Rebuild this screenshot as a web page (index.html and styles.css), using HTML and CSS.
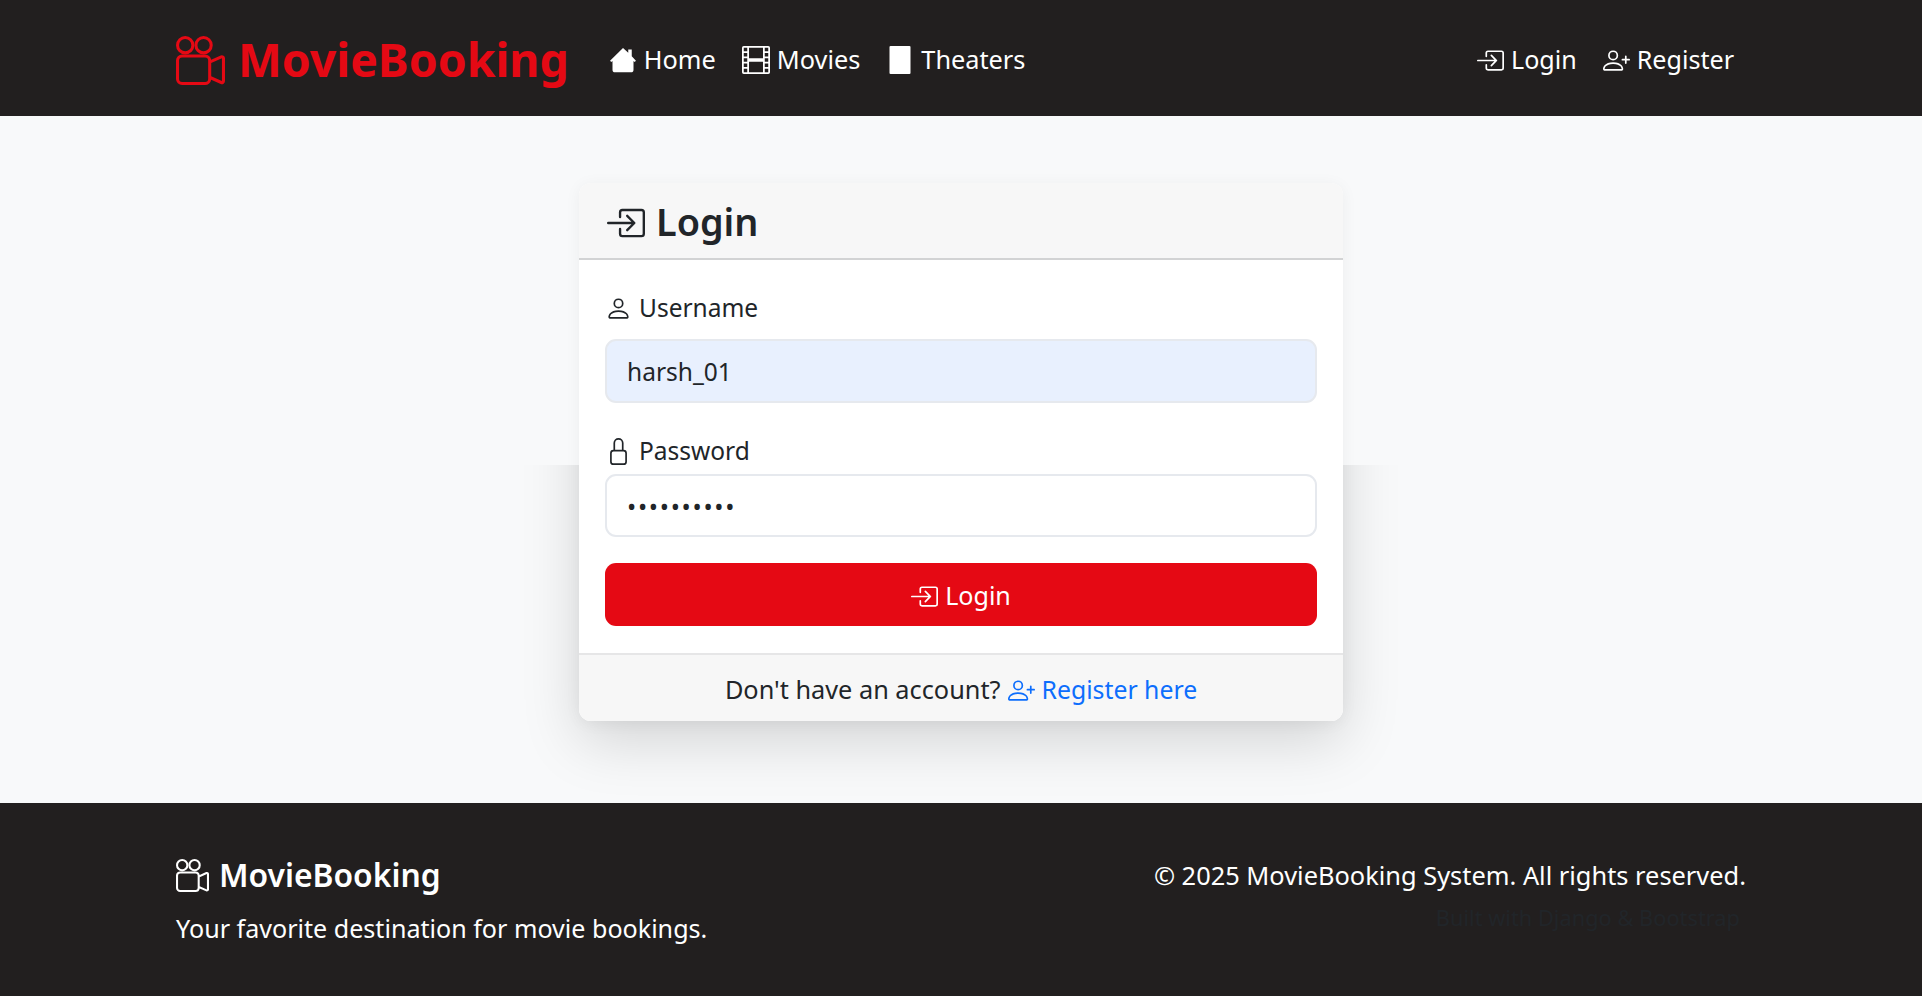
FILE: index.html
```html
<!DOCTYPE html>
<html lang="en">
<head>
  <meta charset="UTF-8">
  <title>Login - MovieBooking</title>
  <link rel="stylesheet" href="styles.css">
</head>
<body>
  <nav class="navbar">
    <a class="brand" href="#">
      <svg class="brand-icon" viewBox="0 0 16 16" fill="currentColor"><path d="M6 3a3 3 0 1 1-6 0 3 3 0 0 1 6 0zM1 3a2 2 0 1 0 4 0 2 2 0 0 0-4 0z"/><path d="M9 6h.5a2 2 0 0 1 1.983 1.738l3.11-1.382A1 1 0 0 1 16 7.269v7.462a1 1 0 0 1-1.406.913l-3.111-1.382A2 2 0 0 1 9.5 16H2a2 2 0 0 1-2-2V8a2 2 0 0 1 2-2h7zm6 8.73V7.27l-3.5 1.555v4.35l3.5 1.556zM1 8v6a1 1 0 0 0 1 1h7.5a1 1 0 0 0 1-1V8a1 1 0 0 0-1-1H2a1 1 0 0 0-1 1z"/><path d="M9 6a3 3 0 1 0 0-6 3 3 0 0 0 0 6zM7 3a2 2 0 1 1 4 0 2 2 0 0 1-4 0z"/></svg>
      MovieBooking
    </a>
    <ul class="nav-links nav-main">
      <li><a href="#"><svg class="icon" viewBox="0 0 16 16" fill="currentColor"><path d="M8 1.200.6 8.400l.7.7L2 8.500v5A1.500 1.500 0 0 0 3.500 15h9a1.500 1.500 0 0 0 1.500-1.500v-5l.7.6.7-.7L13 5.800V2h-2v1.800z"/></svg>Home</a></li>
      <li><a href="#"><svg class="icon" viewBox="0 0 16 16" fill="currentColor"><path d="M0 1a1 1 0 0 1 1-1h14a1 1 0 0 1 1 1v14a1 1 0 0 1-1 1H1a1 1 0 0 1-1-1V1zm4 0v6h8V1H4zm8 8H4v6h8V9zM1 1v2h2V1H1zm2 3H1v2h2V4zM1 7v2h2V7H1zm2 3H1v2h2v-2zm-2 3v2h2v-2H1zM15 1h-2v2h2V1zm-2 3v2h2V4h-2zm2 3h-2v2h2V7zm-2 3v2h2v-2h-2zm2 3h-2v2h2v-2z"/></svg>Movies</a></li>
      <li><a href="#"><svg class="icon" viewBox="0 0 16 16" fill="currentColor"><rect x="2" y="0" width="12" height="16" rx="0.6"/></svg>Theaters</a></li>
    </ul>
    <ul class="nav-links nav-right">
      <li><a href="#"><svg class="icon" viewBox="0 0 16 16" fill="currentColor"><path fill-rule="evenodd" d="M10 3.5a.5.5 0 0 0-.5-.5h-8a.5.5 0 0 0-.5.5v9a.5.5 0 0 0 .5.5h8a.5.5 0 0 0 .5-.5v-2a.5.5 0 0 1 1 0v2A1.5 1.5 0 0 1 9.5 14h-8A1.5 1.5 0 0 1 0 12.5v-9A1.5 1.5 0 0 1 1.5 2h8A1.5 1.5 0 0 1 11 3.5v2a.5.5 0 0 1-1 0v-2z" transform="matrix(-1 0 0 1 16 0)"/><path fill-rule="evenodd" d="M11.854 8.354a.5.5 0 0 0 0-.708l-3-3a.5.5 0 1 0-.708.708L10.293 7.500H.5a.5.5 0 0 0 0 1h9.793l-2.147 2.146a.5.5 0 0 0 .708.708l3-3z"/></svg>Login</a></li>
      <li><a href="#"><svg class="icon" viewBox="0 0 16 16" fill="currentColor"><path d="M6 8a3 3 0 1 0 0-6 3 3 0 0 0 0 6zm2-3a2 2 0 1 1-4 0 2 2 0 0 1 4 0zm4 8c0 1-1 1-1 1H1s-1 0-1-1 1-4 6-4 6 3 6 4zm-1-.004c-.001-.246-.154-.986-.832-1.664C9.516 10.680 8.289 10 6 10c-2.290 0-3.516.68-4.168 1.332-.678.678-.83 1.418-.832 1.664h10z"/><path fill-rule="evenodd" d="M13.500 5a.5.5 0 0 1 .5.5V7h1.500a.5.5 0 0 1 0 1H14v1.500a.5.5 0 0 1-1 0V8h-1.500a.5.5 0 0 1 0-1H13V5.500a.5.5 0 0 1 .5-.5z"/></svg>Register</a></li>
    </ul>
  </nav>

  <main class="content">
    <div class="card-shadow"></div>
    <div class="card">
      <div class="card-header">
        <h1><svg class="icon" viewBox="0 0 16 16" fill="currentColor"><path fill-rule="evenodd" d="M10 3.5a.5.5 0 0 0-.5-.5h-8a.5.5 0 0 0-.5.5v9a.5.5 0 0 0 .5.5h8a.5.5 0 0 0 .5-.5v-2a.5.5 0 0 1 1 0v2A1.5 1.5 0 0 1 9.5 14h-8A1.5 1.5 0 0 1 0 12.5v-9A1.5 1.5 0 0 1 1.5 2h8A1.5 1.5 0 0 1 11 3.5v2a.5.5 0 0 1-1 0v-2z" transform="matrix(-1 0 0 1 16 0)"/><path fill-rule="evenodd" d="M11.854 8.354a.5.5 0 0 0 0-.708l-3-3a.5.5 0 1 0-.708.708L10.293 7.500H.5a.5.5 0 0 0 0 1h9.793l-2.147 2.146a.5.5 0 0 0 .708.708l3-3z"/></svg>Login</h1>
      </div>
      <form class="card-body">
        <label class="user-label"><svg class="icon" viewBox="0 0 16 16" fill="currentColor"><path d="M8 8a3 3 0 1 0 0-6 3 3 0 0 0 0 6zm2-3a2 2 0 1 1-4 0 2 2 0 0 1 4 0zm4 8c0 1-1 1-1 1H3s-1 0-1-1 1-4 6-4 6 3 6 4zm-1-.004c-.001-.246-.154-.986-.832-1.664C11.516 10.680 10.289 10 8 10c-2.290 0-3.516.68-4.168 1.332-.678.678-.83 1.418-.832 1.664h10z"/></svg>Username</label>
        <input class="field filled" type="text" value="harsh_01">
        <label class="pass-label"><svg class="icon" viewBox="0 0 16 16" fill="currentColor"><path d="M8 1a2 2 0 0 1 2 2v4H6V3a2 2 0 0 1 2-2zm3 6V3a3 3 0 0 0-6 0v4a2 2 0 0 0-2 2v5a2 2 0 0 0 2 2h6a2 2 0 0 0 2-2V9a2 2 0 0 0-2-2zM5 8h6a1 1 0 0 1 1 1v5a1 1 0 0 1-1 1H5a1 1 0 0 1-1-1V9a1 1 0 0 1 1-1z"/></svg>Password</label>
        <input class="field secret" type="password" value="harshpatel">
        <button class="submit" type="button"><svg class="icon" viewBox="0 0 16 16" fill="currentColor"><path fill-rule="evenodd" d="M10 3.5a.5.5 0 0 0-.5-.5h-8a.5.5 0 0 0-.5.5v9a.5.5 0 0 0 .5.5h8a.5.5 0 0 0 .5-.5v-2a.5.5 0 0 1 1 0v2A1.5 1.5 0 0 1 9.5 14h-8A1.5 1.5 0 0 1 0 12.5v-9A1.5 1.5 0 0 1 1.5 2h8A1.5 1.5 0 0 1 11 3.5v2a.5.5 0 0 1-1 0v-2z" transform="matrix(-1 0 0 1 16 0)"/><path fill-rule="evenodd" d="M11.854 8.354a.5.5 0 0 0 0-.708l-3-3a.5.5 0 1 0-.708.708L10.293 7.500H.5a.5.5 0 0 0 0 1h9.793l-2.147 2.146a.5.5 0 0 0 .708.708l3-3z"/></svg>Login</button>
      </form>
      <div class="card-footer">
        Don't have an account?
        <a href="#"><svg class="icon" viewBox="0 0 16 16" fill="currentColor"><path d="M6 8a3 3 0 1 0 0-6 3 3 0 0 0 0 6zm2-3a2 2 0 1 1-4 0 2 2 0 0 1 4 0zm4 8c0 1-1 1-1 1H1s-1 0-1-1 1-4 6-4 6 3 6 4zm-1-.004c-.001-.246-.154-.986-.832-1.664C9.516 10.680 8.289 10 6 10c-2.290 0-3.516.68-4.168 1.332-.678.678-.83 1.418-.832 1.664h10z"/><path fill-rule="evenodd" d="M13.500 5a.5.5 0 0 1 .5.5V7h1.500a.5.5 0 0 1 0 1H14v1.500a.5.5 0 0 1-1 0V8h-1.500a.5.5 0 0 1 0-1H13V5.500a.5.5 0 0 1 .5-.5z"/></svg>Register here</a>
      </div>
    </div>
  </main>

  <footer class="footer">
    <div class="footer-left">
      <h2><svg class="icon" viewBox="0 0 16 16" fill="currentColor"><path d="M6 3a3 3 0 1 1-6 0 3 3 0 0 1 6 0zM1 3a2 2 0 1 0 4 0 2 2 0 0 0-4 0z"/><path d="M9 6h.5a2 2 0 0 1 1.983 1.738l3.11-1.382A1 1 0 0 1 16 7.269v7.462a1 1 0 0 1-1.406.913l-3.111-1.382A2 2 0 0 1 9.500 16H2a2 2 0 0 1-2-2V8a2 2 0 0 1 2-2h7zm6 8.730V7.270l-3.500 1.555v4.350l3.500 1.556zM1 8v6a1 1 0 0 0 1 1h7.500a1 1 0 0 0 1-1V8a1 1 0 0 0-1-1H2a1 1 0 0 0-1 1z"/><path d="M9 6a3 3 0 1 0 0-6 3 3 0 0 0 0 6zM7 3a2 2 0 1 1 4 0 2 2 0 0 1-4 0z"/></svg>MovieBooking</h2>
      <p>Your favorite destination for movie bookings.</p>
    </div>
    <div class="footer-right">
      <p>© 2025 MovieBooking System. All rights reserved.</p>
      <p class="built">Built with Django &amp; Bootstrap</p>
    </div>
  </footer>
</body>
</html>
```

FILE: styles.css
```css
* {
  box-sizing: border-box;
}
body {
  margin: 0;
  min-height: 996px;
  display: flex;
  flex-direction: column;
  font-family: "Noto Sans", "Open Sans", sans-serif;
  font-size: 25.1px;
  line-height: 39px;
  color: #212529;
  background: #f8f9fa;
}
a {
  color: inherit;
  text-decoration: none;
}
ul {
  list-style: none;
  margin: 0;
  padding: 0;
}
.icon {
  width: 27px;
  height: 27px;
  vertical-align: -5px;
  margin-right: 7px;
}

/* navbar */
.navbar {
  height: 116px;
  padding: 2px 176px 0;
  display: flex;
  align-items: center;
  background: #221f1f;
  color: #fff;
}
.brand {
  display: flex;
  align-items: center;
  gap: 13px;
  font-size: 46.4px;
  font-weight: 700;
  color: #e50914;
  margin-right: 40px;
}
.brand-icon {
  width: 49px;
  height: 49px;
  margin-top: 2px;
}
.nav-links {
  display: flex;
  gap: 26px;
}
.nav-main {
  font-size: 25.3px;
}
.nav-main .icon {
  width: 28px;
  height: 28px;
}
.nav-right {
  margin-left: auto;
  margin-right: 12px;
}

/* login card */
.content {
  flex: 1;
  position: relative;
  padding-top: 67px;
}
.card-shadow {
  position: absolute;
  top: 349px;
  left: 519px;
  width: 884px;
  height: 338px;
  overflow: hidden;
}
.card-shadow::before {
  content: "";
  position: absolute;
  left: 60px;
  top: -282px;
  width: 764px;
  height: 538px;
  border-radius: 12px;
  box-shadow: 0 20px 59px rgba(0, 0, 0, 0.15);
}
.card {
  position: relative;
  width: 764px;
  margin: 0 auto;
  background: #fff;
  border-radius: 12px;
  box-shadow: 0 2px 16px rgba(0, 0, 0, 0.05);
  overflow: hidden;
}
.card-header {
  height: 76.5px;
  padding: 4px 28px 0;
  display: flex;
  align-items: center;
  background: #f7f7f7;
  border-bottom: 2px solid #d2d3d4;
}
.card-header h1 {
  margin: 0;
  font-size: 37.8px;
  font-weight: 600;
}
.card-header .icon {
  width: 38px;
  height: 38px;
  vertical-align: -6px;
  margin-right: 11px;
}
.card-body {
  padding: 28.5px 26px 27px;
  display: flex;
  flex-direction: column;
  font-size: 24.5px;
}
.user-label {
  margin-bottom: 12px;
}
.pass-label {
  margin: 28.5px 0 3.5px;
}
.field {
  height: 63.5px;
  padding: 2px 20px 0;
  font: inherit;
  color: #212529;
  background: #fff;
  border: 2px solid #e6e9ee;
  border-radius: 11px;
  outline: none;
}
.filled {
  background: #e8f0fe;
}
.secret {
  letter-spacing: 1.7px;
}
.submit {
  height: 63.5px;
  padding-top: 3px;
  margin-top: 25.5px;
  font: inherit;
  font-size: 25.1px;
  color: #fff;
  background: #e50914;
  border: none;
  border-radius: 11px;
}
.card-footer {
  height: 68px;
  padding-top: 2px;
  display: flex;
  align-items: center;
  justify-content: center;
  gap: 7px;
  font-size: 25.3px;
  background: #f7f7f7;
  border-top: 2px solid #e6e6e7;
}
.card-footer a {
  font-size: 24.8px;
  color: #0d6efd;
}

/* footer */
.footer {
  height: 193px;
  padding: 53px 176px 0;
  display: flex;
  justify-content: space-between;
  background: #221f1f;
  color: #fff;
}
.footer h2 {
  margin: 0 0 15px;
  font-size: 31.8px;
  font-weight: 600;
  line-height: 38px;
}
.footer h2 .icon {
  width: 33px;
  height: 33px;
  margin-right: 10px;
}
.footer p {
  margin: 0;
}
.footer-right {
  font-size: 25.4px;
  text-align: right;
}
.footer .built {
  margin: 3px 6px 0 0;
  font-size: 21.8px;
  color: #212529;
}
```
